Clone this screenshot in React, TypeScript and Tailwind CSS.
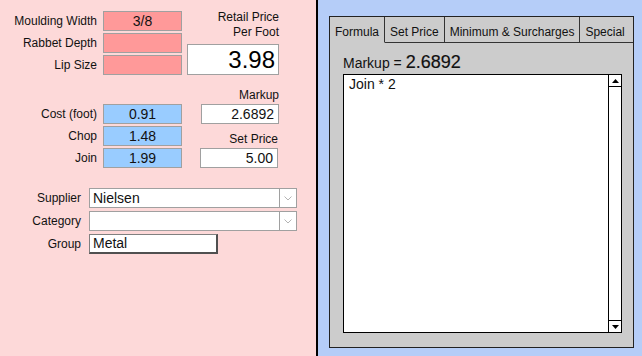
const font = "font-['Liberation_Sans',Arial,sans-serif]";

function Field({ value, color }: { value?: string; color: string }) {
  return (
    <div
      className={`w-[79px] h-[20px] border border-[#a0a0a0] ${color} text-[14px] leading-[18px] text-center text-[#111]`}
    >
      {value}
    </div>
  );
}

function Row({ label, value, color, mt = "" }: { label: string; value?: string; color: string; mt?: string }) {
  return (
    <div className={`flex items-center h-[20px] ${mt}`}>
      <div className="w-[97px] text-right leading-[15px]">{label}</div>
      <div className="ml-[6px]">
        <Field value={value} color={color} />
      </div>
    </div>
  );
}

function Chevron() {
  return (
    <svg width="8" height="5" viewBox="0 0 8 5">
      <path d="M0.5 0.5 L4 4 L7.5 0.5" fill="none" stroke="#b4b4b4" strokeWidth="1" />
    </svg>
  );
}

function Combo({ value }: { value?: string }) {
  return (
    <div className="flex w-[208px] h-[20px] border border-[#a0a0a0] bg-white">
      <div className="flex-1 pl-[3px] text-[14px] leading-[18px] text-[#111]">{value}</div>
      <div className="w-[17px] border-l border-[#a0a0a0] flex items-center justify-center">
        <Chevron />
      </div>
    </div>
  );
}

function Tab({ label, active, last }: { label: string; active?: boolean; last?: boolean }) {
  return (
    <div
      className={`h-[26px] pt-[8px] px-[5px] leading-[15px] whitespace-nowrap ${
        last ? "flex-1" : "border-r border-[#333]"
      } ${active ? "border-b border-b-transparent" : "border-b border-[#333]"}`}
    >
      {label}
    </div>
  );
}

export default function App() {
  return (
    <div className={`flex w-[642px] h-[356px] ${font} text-[12px] text-[#111] overflow-hidden`}>
      {/* left side */}
      <div className="w-[318px] shrink-0 bg-[#fdd9d9] border-r-2 border-black">
        <div className="flex pt-[11px]">
          <div className="flex flex-col">
            <Row label="Moulding Width" value="3/8" color="bg-[#ff9999]" />
            <Row label="Rabbet Depth" color="bg-[#ff9999]" mt="mt-[2px]" />
            <Row label="Lip Size" color="bg-[#ff9999]" mt="mt-[2px]" />
            <Row label="Cost (foot)" value="0.91" color="bg-[#99ccff]" mt="mt-[29px]" />
            <Row label="Chop" value="1.48" color="bg-[#99ccff]" mt="mt-[2px]" />
            <Row label="Join" value="1.99" color="bg-[#99ccff]" mt="mt-[2px]" />
          </div>
          <div className="ml-[5px] w-[92px] -mt-[1px] flex flex-col items-end text-right leading-[15px]">
            <div>Retail Price</div>
            <div>Per Foot</div>
            <div className="mt-[4px] w-[92px] h-[31px] border border-[#a0a0a0] bg-white text-[24px] leading-[29px] pr-[3px] text-black">
              3.98
            </div>
            <div className="mt-[13px]">Markup</div>
            <div className="mt-[1px] w-[78px] h-[20px] border border-[#a0a0a0] bg-white text-[14px] leading-[18px] pr-[4px]">
              2.6892
            </div>
            <div className="mt-[8px] mr-[1px]">Set Price</div>
            <div className="mt-[1px] mr-[1px] w-[78px] h-[20px] border border-[#a0a0a0] bg-white text-[14px] leading-[18px] pr-[4px]">
              5.00
            </div>
          </div>
        </div>

        <div className="mt-[20px] flex flex-col gap-[3px]">
          <div className="flex items-center">
            <div className="w-[81px] text-right">Supplier</div>
            <div className="ml-[8px]">
              <Combo value="Nielsen" />
            </div>
          </div>
          <div className="flex items-center">
            <div className="w-[81px] text-right">Category</div>
            <div className="ml-[8px]">
              <Combo />
            </div>
          </div>
          <div className="flex items-center">
            <div className="w-[81px] text-right">Group</div>
            <div className="ml-[8px] w-[129px] h-[20px] border-t border-l border-[#808080] border-r-2 border-b-2 border-r-[#505050] border-b-[#505050] bg-white pl-[3px] text-[14px] leading-[17px]">
              Metal
            </div>
          </div>
        </div>
      </div>

      {/* right side */}
      <div className="flex-1 bg-[#b5cdf8] pl-[11px] pt-[16px] pr-[8px] pb-[8px]">
        <div className="h-full border border-[#222] bg-[#cccccc] flex flex-col">
          <div className="flex">
            <Tab label="Formula" active />
            <Tab label="Set Price" />
            <Tab label="Minimum & Surcharges" />
            <Tab label="Special" last />
          </div>
          <div className="flex-1 flex flex-col pl-[13px] pr-[11px] pb-[14px]">
            <div className="mt-[8px] h-[23px] flex items-baseline leading-[22px]">
              <span className="text-[14px]">Markup =</span>
              <span className="ml-[4px] text-[18px] [-webkit-text-stroke:0.2px_#111]">2.6892</span>
            </div>
            <div className="flex-1 flex border border-black bg-white">
              <div className="flex-1 pl-[5px] pt-[1px] text-[14px] leading-[17px]">Join * 2</div>
              <div className="w-[13px] border-l border-black flex flex-col justify-between">
                <div className="h-[12px] border-b border-black flex items-center justify-center">
                  <svg width="7" height="4" viewBox="0 0 7 4">
                    <path d="M0 4 L3.5 0 L7 4 Z" fill="#000" />
                  </svg>
                </div>
                <div className="h-[12px] border-t border-black flex items-center justify-center">
                  <svg width="7" height="4" viewBox="0 0 7 4">
                    <path d="M0 0 L3.5 4 L7 0 Z" fill="#000" />
                  </svg>
                </div>
              </div>
            </div>
          </div>
        </div>
      </div>
    </div>
  );
}
